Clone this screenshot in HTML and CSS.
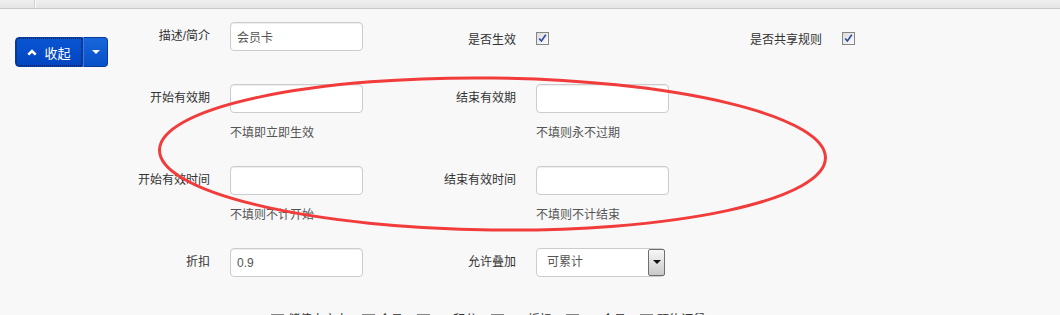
FILE: index.html
```html
<!DOCTYPE html>
<html lang="zh-CN">
<head>
    <meta charset="UTF-8">
    <meta name="viewport" content="width=device-width, initial-scale=1.0">
    <title>会员卡规则</title>
    <link rel="stylesheet" href="styles.css">
</head>
<body>
    <div class="topbar">
        <div class="topbar-tab"></div>
    </div>

    <div class="main">
        <!-- 左侧收起按钮 -->
        <div class="side">
            <div class="btn-group">
                <button class="btn btn-primary btn-main" type="button">
                    <svg class="icon-up" width="10" height="7" viewBox="0 0 10 7">
                        <polyline points="1.3,5.7 5,2 8.7,5.7" fill="none" stroke="#fff" stroke-width="2.6" stroke-linejoin="miter"/>
                    </svg>
                    收起
                </button>
                <button class="btn btn-primary btn-toggle" type="button"><span class="caret"></span></button>
            </div>
        </div>

        <form class="form">
            <div class="form-row form-row--plain">
                <label class="form-label">描述/简介</label>
                <div class="form-control"><input class="text-input" type="text" value="会员卡"></div>
                <label class="form-label form-label--check">是否生效</label>
                <div class="form-control check-cell">
                    <span class="check">
                        <svg width="11" height="11" viewBox="0 0 11 11"><path d="M2.2 5.4 L4.4 8 L8.8 1.8" fill="none" stroke="#2d4b9e" stroke-width="1.6"/></svg>
                    </span>
                </div>
                <label class="form-label form-label--check">是否共享规则</label>
                <div class="form-control check-cell">
                    <span class="check">
                        <svg width="11" height="11" viewBox="0 0 11 11"><path d="M2.2 5.4 L4.4 8 L8.8 1.8" fill="none" stroke="#2d4b9e" stroke-width="1.6"/></svg>
                    </span>
                </div>
            </div>

            <div class="form-row">
                <label class="form-label">开始有效期</label>
                <div class="form-control">
                    <input class="text-input" type="text">
                    <div class="help">不填即立即生效</div>
                </div>
                <label class="form-label">结束有效期</label>
                <div class="form-control">
                    <input class="text-input" type="text">
                    <div class="help">不填则永不过期</div>
                </div>
            </div>

            <div class="form-row">
                <label class="form-label">开始有效时间</label>
                <div class="form-control">
                    <input class="text-input" type="text">
                    <div class="help">不填则不计开始</div>
                </div>
                <label class="form-label">结束有效时间</label>
                <div class="form-control">
                    <input class="text-input" type="text">
                    <div class="help">不填则不计结束</div>
                </div>
            </div>

            <div class="form-row form-row--plain">
                <label class="form-label">折扣</label>
                <div class="form-control"><input class="text-input" type="text" value="0.9"></div>
                <label class="form-label">允许叠加</label>
                <div class="form-control">
                    <div class="select-box">
                        <span class="select-text">可累计</span>
                        <span class="select-arrow"></span>
                    </div>
                </div>
            </div>

            <div class="check-list">
                <label class="check-item"><span class="check"></span>储值卡充卡</label>
                <label class="check-item"><span class="check"></span>会员</label>
                <label class="check-item"><span class="check"></span>VIP积分</label>
                <label class="check-item"><span class="check"></span>VIP折扣</label>
                <label class="check-item"><span class="check"></span>VIP会员</label>
                <label class="check-item"><span class="check"></span>预约订餐</label>
            </div>
        </form>
    </div>

    <!-- 红色圈注 -->
    <svg class="annotation" width="1060" height="315" viewBox="0 0 1060 315">
        <ellipse cx="492.5" cy="154" rx="333" ry="76" transform="rotate(0.7 492.5 154)" fill="none" stroke="#f23b3b" stroke-width="3"/>
    </svg>
</body>
</html>
```

FILE: styles.css
```css
* {
    margin: 0;
    padding: 0;
    box-sizing: border-box;
}

html, body {
    height: 100%;
    width: 100%;
    overflow: hidden;
    font-family: 'Liberation Sans', 'Noto Sans CJK SC', sans-serif;
    font-size: 12px;
    color: #333;
    background-color: #f8f8f8;
}

body {
    position: relative;
}

/* 顶部栏 */
.topbar {
    height: 9px;
    background: linear-gradient(#efefef, #e5e5e5);
    border-bottom: 1px solid #c9c9c9;
}

.topbar-tab {
    width: 35px;
    height: 100%;
    border-right: 1px solid #d2d2d2;
    box-shadow: 1px 0 0 #fafafa;
}

.main {
    display: flex;
    padding: 13px 0 0 15px;
}

/* 按钮 */
.side {
    width: 94px;
    flex-shrink: 0;
}

.btn-group {
    display: flex;
    margin-top: 15px;
    width: 93px;
}

.btn {
    height: 30px;
    border: 1px solid #073c9f;
    color: #fff;
    font-family: inherit;
    font-size: 13px;
    cursor: pointer;
    display: flex;
    align-items: center;
    justify-content: center;
}

.btn-primary {
    background: linear-gradient(#0a55d2, #0245c0);
}

.btn-main {
    width: 68px;
    gap: 7px;
    border-radius: 4px 0 0 4px;
    outline: 1px dotted #0d2455;
    outline-offset: -2px;
}

.btn-toggle {
    width: 25px;
    border-left: 1px solid #3d7ae0;
    border-radius: 0 4px 4px 0;
    background: linear-gradient(#1866da, #0850c8);
}

.caret {
    width: 0;
    height: 0;
    border-top: 4px solid #fff;
    border-left: 4px solid transparent;
    border-right: 4px solid transparent;
}

/* 表单 */
.form {
    flex: 1;
}

.form-row {
    display: grid;
    grid-template-columns: 121px 133px 173px 133px 173px auto;
    align-items: start;
    margin-bottom: 23px;
}

.form-row--plain {
    margin-bottom: 33px;
}

.form-label {
    text-align: right;
    padding-right: 20px;
    line-height: 29px;
    color: #333;
}

.form-label--check {
    padding-top: 4px;
    margin-bottom: -4px;
}

.check-cell {
    padding-top: 10px;
}

.text-input {
    display: block;
    width: 133px;
    height: 29px;
    padding: 0 6px;
    border: 1px solid #ccc;
    border-radius: 4px;
    background-color: #fff;
    box-shadow: inset 0 1px 1px rgba(0, 0, 0, 0.075);
    font-family: inherit;
    font-size: 12px;
    color: #555;
    outline: none;
}

.help {
    margin-top: 10px;
    line-height: 20px;
    color: #555;
    white-space: nowrap;
}

.select-box {
    display: flex;
    width: 129px;
    height: 29px;
    border: 1px solid #ccc;
    border-radius: 4px;
    background-color: #fff;
    padding: 0 0 0 10px;
    color: #555;
}

.select-text {
    flex: 1;
    line-height: 27px;
}

.select-arrow {
    width: 17px;
    margin: 0 -1px 0 0;
    border: 1px solid #6e6e6e;
    border-radius: 2px;
    background: linear-gradient(#f7f7f7, #c9c9c9);
    display: flex;
    justify-content: center;
    padding-top: 10px;
}

.select-arrow::after {
    content: '';
    width: 0;
    height: 0;
    border-top: 4px solid #111;
    border-left: 4px solid transparent;
    border-right: 4px solid transparent;
}

/* 复选框 */
.check {
    display: inline-flex;
    align-items: center;
    justify-content: center;
    width: 13px;
    height: 13px;
    border: 1px solid #858585;
    background: linear-gradient(135deg, #dcdcdc, #fbfbfb);
}

.check-list {
    display: flex;
    gap: 14px;
    padding-left: 162px;
    line-height: 20px;
}

.check-item {
    display: flex;
    align-items: center;
    gap: 4px;
    white-space: nowrap;
}

.check-item .check {
    background: linear-gradient(135deg, #e6e6e6, #fdfdfd);
}

/* 红圈标注 */
.annotation {
    position: absolute;
    top: 0;
    left: 0;
    pointer-events: none;
}
```
